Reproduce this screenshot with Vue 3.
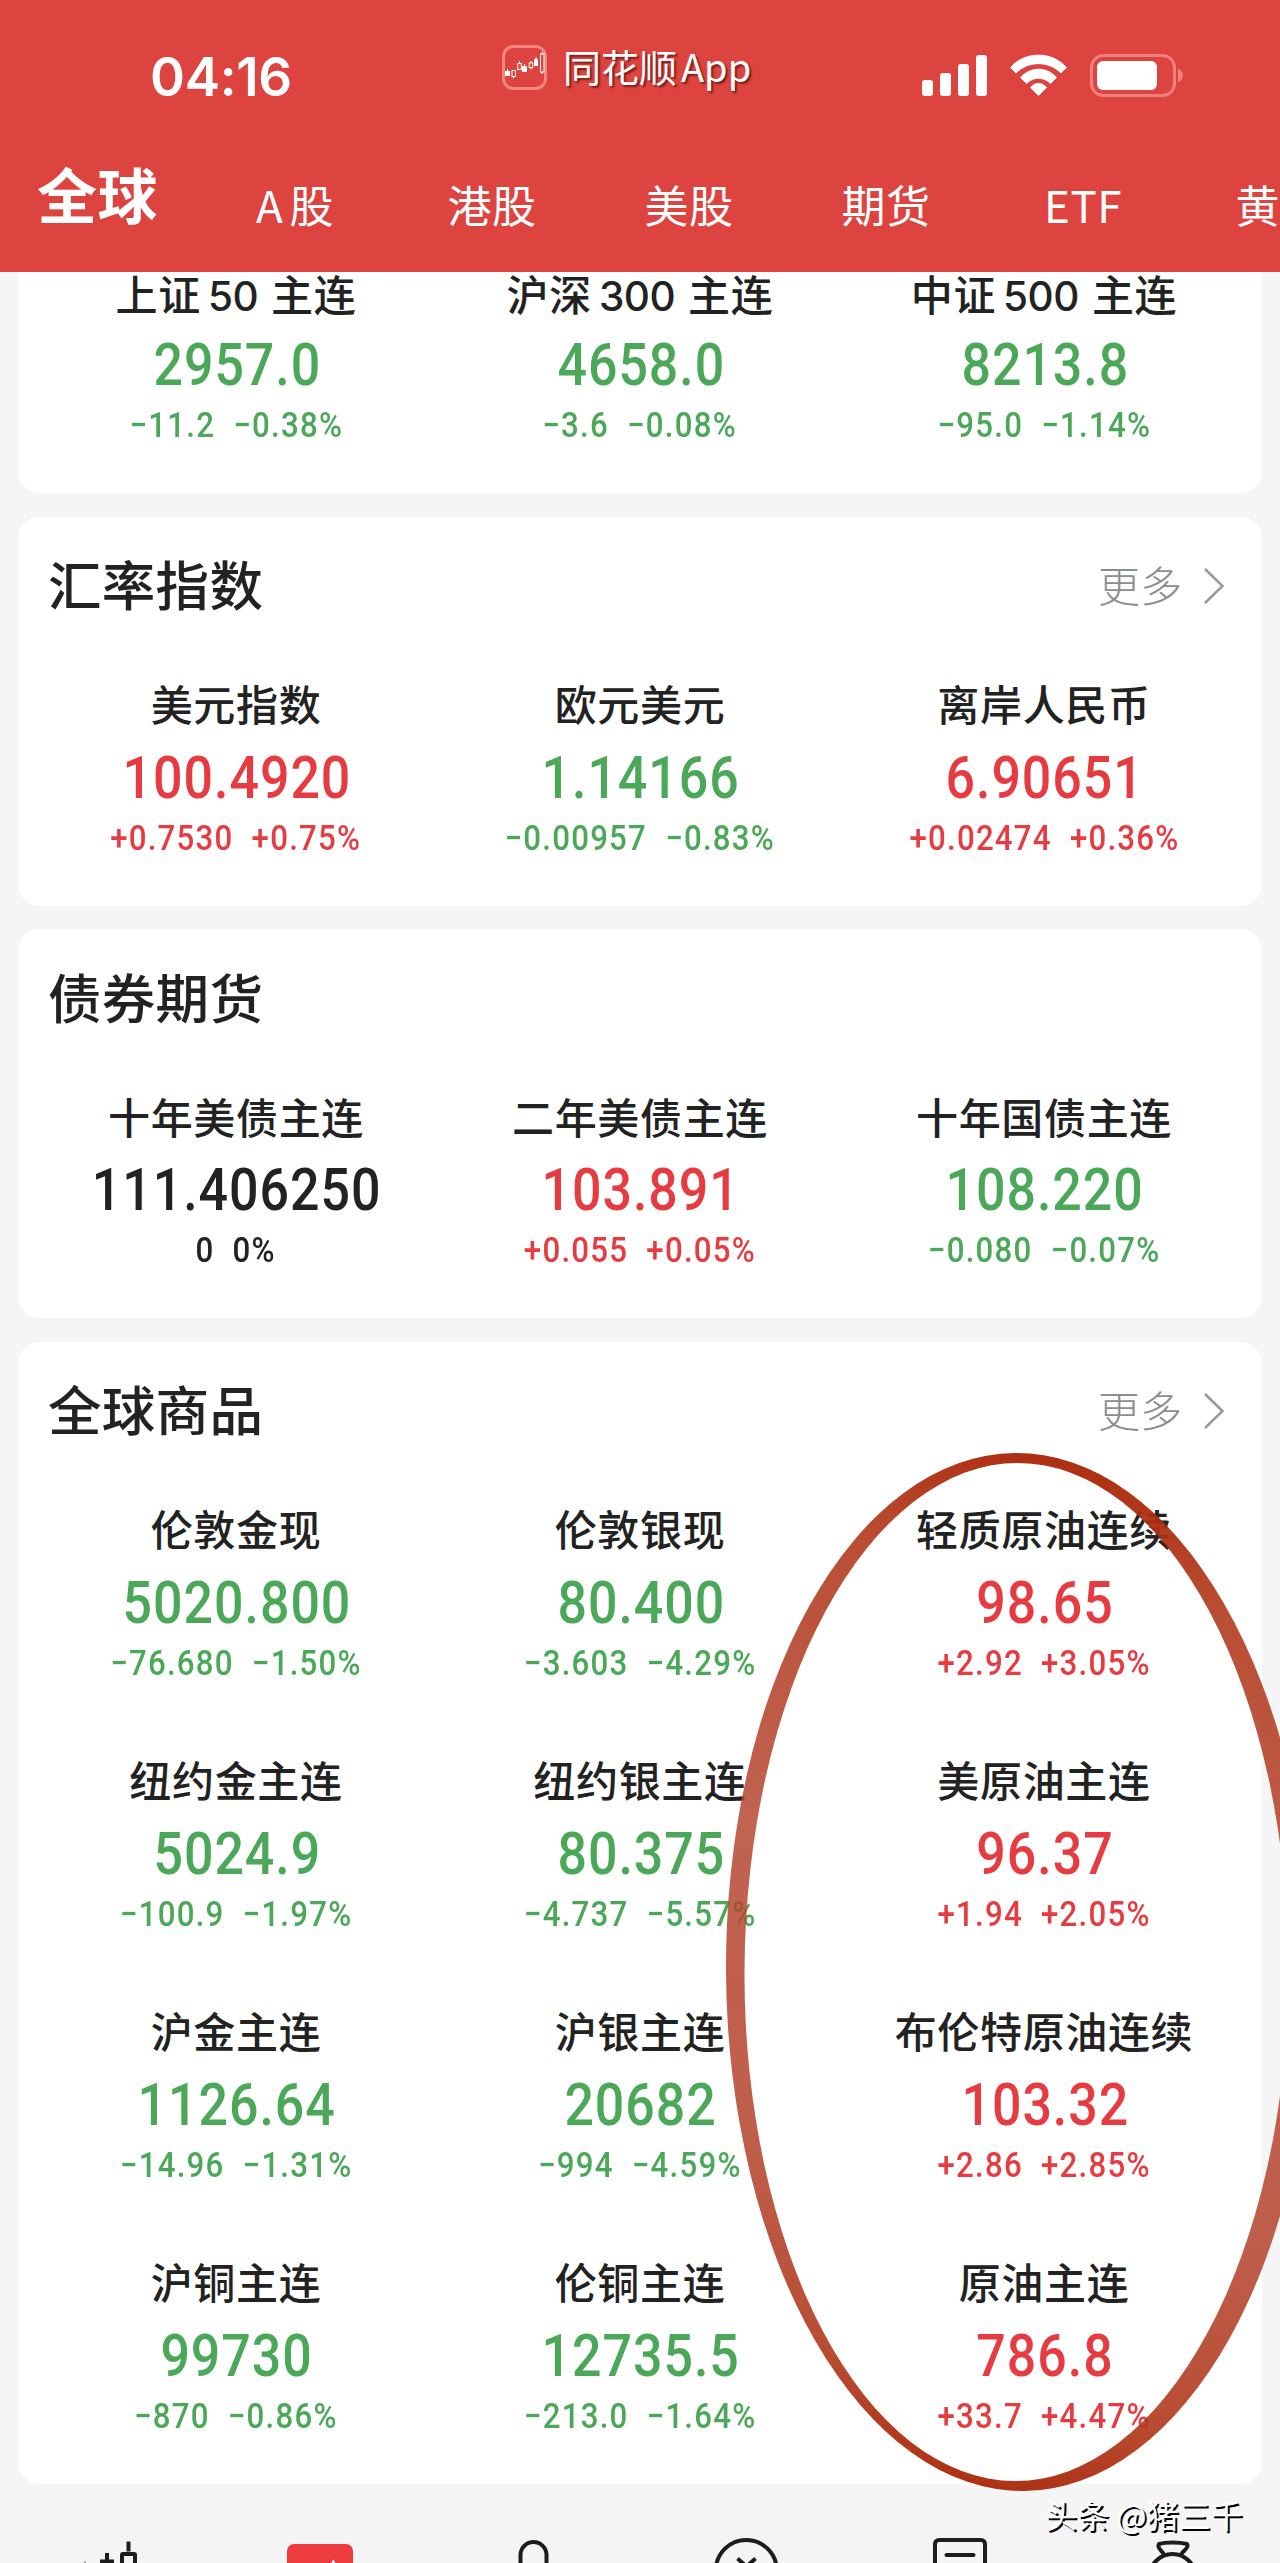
<script setup>
const tabs = [['全球'], ['A', '股'], ['港股'], ['美股'], ['期货'], ['ETF'], ['黄金']]

const q = (name, value, change, percent) => ({
  name,
  value,
  change,
  percent,
  trend: change.startsWith('+') ? 'up' : change.startsWith('−') ? 'down' : 'flat',
})

const sections = [
  {
    quotes: [
      q(['上证', '50', '主连'], '2957.0', '−11.2', '−0.38%'),
      q(['沪深', '300', '主连'], '4658.0', '−3.6', '−0.08%'),
      q(['中证', '500', '主连'], '8213.8', '−95.0', '−1.14%'),
    ],
  },
  {
    title: '汇率指数',
    more: true,
    quotes: [
      q(['美元指数'], '100.4920', '+0.7530', '+0.75%'),
      q(['欧元美元'], '1.14166', '−0.00957', '−0.83%'),
      q(['离岸人民币'], '6.90651', '+0.02474', '+0.36%'),
    ],
  },
  {
    title: '债券期货',
    quotes: [
      q(['十年美债主连'], '111.406250', '0', '0%'),
      q(['二年美债主连'], '103.891', '+0.055', '+0.05%'),
      q(['十年国债主连'], '108.220', '−0.080', '−0.07%'),
    ],
  },
  {
    title: '全球商品',
    more: true,
    quotes: [
      q(['伦敦金现'], '5020.800', '−76.680', '−1.50%'),
      q(['伦敦银现'], '80.400', '−3.603', '−4.29%'),
      q(['轻质原油连续'], '98.65', '+2.92', '+3.05%'),
      q(['纽约金主连'], '5024.9', '−100.9', '−1.97%'),
      q(['纽约银主连'], '80.375', '−4.737', '−5.57%'),
      q(['美原油主连'], '96.37', '+1.94', '+2.05%'),
      q(['沪金主连'], '1126.64', '−14.96', '−1.31%'),
      q(['沪银主连'], '20682', '−994', '−4.59%'),
      q(['布伦特原油连续'], '103.32', '+2.86', '+2.85%'),
      q(['沪铜主连'], '99730', '−870', '−0.86%'),
      q(['伦铜主连'], '12735.5', '−213.0', '−1.64%'),
      q(['原油主连'], '786.8', '+33.7', '+4.47%'),
    ],
  },
]
</script>

<template>
  <div class="page">
    <header class="header">
      <div class="status">
        <div class="time">04:16</div>
        <div class="brand">
          <svg class="logo" width="45" height="45" viewBox="0 0 45 45" fill="none">
            <rect x="1.5" y="1.5" width="42" height="42" rx="10" stroke="#f28580" stroke-width="3" />
            <g fill="#fff">
              <rect x="3" y="26" width="5" height="5" />
              <rect x="20" y="21" width="5" height="6" />
              <rect x="32" y="14" width="4" height="7" />
            </g>
            <g stroke="#fff" stroke-width="1">
              <path d="M5.500 24v2M22.500 19v2M34 12v2M11.500 31.500v2M17.500 16v2M29 22.500v2M29 16v2M40 7v2M40 27v2" />
              <rect x="10" y="25.500" width="3.500" height="6" />
              <rect x="15.800" y="18.500" width="3.500" height="6" />
              <rect x="27.200" y="18" width="3.500" height="4.500" />
              <rect x="38.500" y="9" width="3.500" height="18" />
            </g>
          </svg>
          <span class="brand-name">同花顺<span class="brand-app">App</span></span>
        </div>
        <svg class="indicators" width="262" height="44" viewBox="0 0 262 44" fill="#fff">
          <rect x="0" y="26" width="11" height="16" rx="3" />
          <rect x="18" y="19" width="11" height="23" rx="3" />
          <rect x="36" y="10" width="11" height="32" rx="3" />
          <rect x="54" y="1" width="11" height="41" rx="3" />
          <path d="M88.500 13.500C103 -3 130 -3 144.500 13.500L139 19C127 6.500 106 6.500 94 19Z" stroke="#fff" stroke-width="1" stroke-linejoin="round" />
          <path d="M98.500 23.500C108.500 12.500 124.500 12.500 134.500 23.500L128.500 29.500C122 22.500 111 22.500 104.500 29.500Z" stroke="#fff" stroke-width="1" stroke-linejoin="round" />
          <path d="M108.500 33.500C113.500 28 119.500 28 124.500 33.500L116.500 41.500Z" stroke="#fff" stroke-width="1" stroke-linejoin="round" />
          <rect x="169.500" y="1.500" width="83" height="40" rx="12" fill="none" stroke="#f0807d" stroke-width="3" />
          <rect x="175" y="7" width="60" height="29" rx="6" />
          <path d="M256 14.500C262.500 17 262.500 26 256 28.500Z" fill="#f0807d" />
        </svg>
      </div>
      <nav class="tabs">
        <span v-for="(tab, i) in tabs" :key="i" class="tab" :class="{ active: i === 0 }">
          <span v-for="part in tab" :key="part">{{ part }}</span>
        </span>
      </nav>
    </header>

    <main class="main">
      <section v-for="(s, i) in sections" :key="i" class="card" :class="{ clipped: !s.title }">
        <div v-if="s.title" class="card-head">
          <h2 class="title">{{ s.title }}</h2>
          <span v-if="s.more" class="more">
            <span class="more-label">更多</span>
            <svg width="22" height="38" viewBox="0 0 22 38" fill="none" stroke="#999" stroke-width="2.500">
              <path d="M2 2L19.500 19L2 36" />
            </svg>
          </span>
        </div>
        <div class="grid">
          <div v-for="item in s.quotes" :key="item.value" class="quote" :class="item.trend">
            <div class="name">
              <span v-for="(part, k) in item.name" :key="k" :class="{ digits: k === 1 }">{{ part }}</span>
            </div>
            <div class="value">{{ item.value }}</div>
            <div class="delta"><span>{{ item.change }}</span><span>{{ item.percent }}</span></div>
          </div>
        </div>
      </section>
    </main>

    <footer class="dock">
      <div class="dock-item">
        <svg width="72" height="28" viewBox="0 0 72 28" fill="none" stroke="#1d1d1d" stroke-width="4">
          <path d="M57.500 6.500v10M36 18v10M29 26.500h14" />
          <rect x="51" y="19" width="13" height="30" rx="1" />
          <path d="M13 27h2" stroke="#b5b5b5" stroke-width="2" />
        </svg>
      </div>
      <div class="dock-item">
        <svg width="72" height="28" viewBox="0 0 72 28">
          <rect x="3" y="9" width="66" height="60" rx="7" fill="#ed3c3e" />
          <path d="M48 28l1.300-2l1.300 2" stroke="#fff" stroke-width="1.500" fill="none" />
        </svg>
      </div>
      <div class="dock-item">
        <svg width="72" height="28" viewBox="0 0 72 28" fill="none" stroke="#1d1d1d" stroke-width="4">
          <rect x="23.500" y="7" width="26" height="50" rx="13" />
        </svg>
      </div>
      <div class="dock-item">
        <svg width="72" height="28" viewBox="0 0 72 28" fill="none" stroke="#1d1d1d" stroke-width="4">
          <circle cx="35.300" cy="35.500" r="30.500" />
          <path d="M26.500 23.500l9 8l9-8" />
        </svg>
      </div>
      <div class="dock-item">
        <svg width="72" height="28" viewBox="0 0 72 28" fill="none" stroke="#1d1d1d" stroke-width="4">
          <rect x="11" y="5" width="50" height="54" rx="4" />
          <path d="M22.500 20h27" stroke-linecap="round" />
        </svg>
      </div>
      <div class="dock-item">
        <svg width="72" height="28" viewBox="0 0 72 28" fill="none" stroke="#1d1d1d" stroke-width="4">
          <path d="M27 20C26 16 19 13 22 9C29 7 42 7 50 9C53 13 45 16 44 20" stroke-linejoin="round" />
          <circle cx="35.500" cy="42" r="23" />
        </svg>
      </div>
    </footer>

    <svg class="marker" width="560" height="1060" viewBox="720 1440 560 1060">
      <defs>
        <linearGradient id="ink" gradientUnits="userSpaceOnUse" x1="1110" y1="1465" x2="900" y2="2480">
          <stop offset="0" stop-color="#a92507" stop-opacity="0.960" />
          <stop offset="0.120" stop-color="#b23a1e" stop-opacity="0.900" />
          <stop offset="0.400" stop-color="#b4452f" stop-opacity="0.840" />
          <stop offset="0.700" stop-color="#b4422b" stop-opacity="0.850" />
          <stop offset="0.900" stop-color="#b0371b" stop-opacity="0.900" />
          <stop offset="1" stop-color="#a92507" stop-opacity="0.960" />
        </linearGradient>
        <mask id="ring" maskUnits="userSpaceOnUse" x="700" y="1430" width="640" height="1080">
          <ellipse cx="1019.500" cy="1972" rx="293.500" ry="519" fill="#fff" transform="rotate(-0.500 1019.500 1972)" />
          <ellipse cx="1016.500" cy="1972" rx="272" ry="509" fill="#000" transform="rotate(0.200 1016.500 1972)" />
        </mask>
      </defs>
      <rect x="700" y="1430" width="640" height="1080" fill="url(#ink)" mask="url(#ring)" />
    </svg>
    <div class="watermark">头条 @猪三千</div>
  </div>
</template>

<style>
body {
  margin: 0;
}
</style>

<style scoped>
.page {
  position: relative;
  display: flex;
  flex-direction: column;
  width: 1280px;
  height: 2563px;
  overflow: hidden;
  background: #f5f5f5;
  color: #222;
  font-family: "Noto Sans CJK SC", sans-serif;
}
.header {
  flex: none;
  height: 272px;
  background: #dd443f;
  color: #fff;
}
.status {
  display: flex;
  align-items: flex-start;
  height: 150px;
}
.time {
  width: 352px;
  margin-left: 150px;
  padding-top: 47px;
  font: 600 53px/60px Inter, sans-serif;
  letter-spacing: -0.300px;
}
.brand {
  display: flex;
  align-items: center;
  gap: 16px;
  width: 420px;
  margin-top: 40px;
  height: 55px;
}
.brand-name {
  margin-top: -4px;
  font-size: 38px;
  line-height: 55px;
  white-space: nowrap;
  text-shadow: 2px 2px 2px rgba(60, 0, 0, 0.6);
}
.brand-app {
  margin-left: 4px;
}
.indicators {
  margin-top: 54px;
}
.tabs {
  display: flex;
  width: 1280px;
  overflow: hidden;
  height: 122px;
}
.tab {
  flex: none;
  display: flex;
  justify-content: center;
  gap: 6px;
  width: 197px;
  padding: 21px 1px 0 0;
  box-sizing: border-box;
  font-size: 44px;
  line-height: 66px;
  letter-spacing: 0.5px;
}
.tab.active {
  padding: 10px 2px 0 0;
  font-size: 60px;
  font-weight: 700;
}
.main {
  flex: none;
  display: flex;
  flex-direction: column;
  gap: 23.600px;
  height: 2248px;
  padding: 0 18px;
  box-sizing: border-box;
  overflow: hidden;
}
.card {
  flex: none;
  padding: 0 16px;
  border-radius: 22px;
  background: #fff;
}
.card.clipped {
  margin-top: -29px;
}
.card-head {
  display: flex;
  justify-content: space-between;
  align-items: center;
  height: 138px;
  padding: 0 21px 0 14px;
}
.title {
  margin: -5px 0 0;
  font-size: 53.500px;
  font-weight: 500;
  line-height: 80px;
  letter-spacing: 0.300px;
}
.more {
  display: flex;
  align-items: center;
  gap: 21px;
  color: #8e8e8e;
}
.more-label {
  margin-top: -4px;
  font-size: 42px;
  font-weight: 300;
  line-height: 60px;
}
.grid {
  display: grid;
  grid-template-columns: repeat(3, 404px);
}
.quote {
  display: flex;
  flex-direction: column;
  align-items: center;
  height: 251px;
  padding-top: 18.500px;
  box-sizing: border-box;
  white-space: nowrap;
}
.clipped .quote {
  height: 250px;
  padding-top: 20px;
}
.name {
  display: flex;
  align-items: baseline;
  height: 60px;
  color: #222;
  font-size: 42px;
  font-weight: 500;
  line-height: 60px;
  letter-spacing: 0.650px;
}
.digits {
  margin: 0 13px 0 7px;
  font-family: Inter, sans-serif;
  font-size: 40.500px;
  letter-spacing: -0.500px;
}
.value {
  margin: 2.500px 0 0 2px;
  font: 500 59px/84px Roboto, sans-serif;
  letter-spacing: 1.100px;
  transform: scaleX(0.880);
}
.clipped .value {
  margin-top: 0;
}
.delta {
  display: flex;
  gap: 20.500px;
  font: 500 35.500px/36px Roboto, sans-serif;
  letter-spacing: 1.400px;
  transform: scaleX(0.880);
}
.up {
  color: #e63c41;
}
.down {
  color: #4ba858;
}
.flat {
  color: #222;
}
.dock {
  flex: none;
  display: grid;
  grid-template-columns: repeat(6, 1fr);
  height: 43px;
  background: #f4f4f4;
}
.dock-item {
  display: flex;
  justify-content: center;
  align-items: flex-end;
}
.marker {
  position: absolute;
  left: 720px;
  top: 1440px;
}
.watermark {
  position: absolute;
  left: 1045px;
  top: 2491px;
  color: #fff;
  font-size: 32px;
  line-height: 46px;
  white-space: nowrap;
  text-shadow: 2px 2px 0 #000;
}
</style>
